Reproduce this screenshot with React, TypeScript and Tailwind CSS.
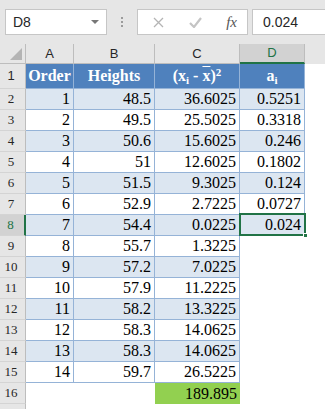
import React from 'react';

const rows: [string, string, string, string][] = [
  ['1', '48.5', '36.6025', '0.5251'],
  ['2', '49.5', '25.5025', '0.3318'],
  ['3', '50.6', '15.6025', '0.246'],
  ['4', '51', '12.6025', '0.1802'],
  ['5', '51.5', '9.3025', '0.124'],
  ['6', '52.9', '2.7225', '0.0727'],
  ['7', '54.4', '0.0225', '0.024'],
  ['8', '55.7', '1.3225', ''],
  ['9', '57.2', '7.0225', ''],
  ['10', '57.9', '11.2225', ''],
  ['11', '58.2', '13.3225', ''],
  ['12', '58.3', '14.0625', ''],
  ['13', '58.3', '14.0625', ''],
  ['14', '59.7', '26.5225', ''],
];

const RowHead = ({ n, active }: { n?: number; active?: boolean }) => (
  <div
    className={
      'w-[26px] shrink-0 flex items-center justify-center pr-[3px] text-[13px] border-b border-[#d4d4d4] ' +
      (active
        ? 'bg-[#d2d2d2] text-[#217346] border-r-2 border-r-[#217346]'
        : 'bg-[#e6e6e6] text-[#262626] border-r border-r-[#bdbdbd]')
    }
  >
    {n}
  </div>
);

const App = () => {
  return (
    <div className="w-[325px] h-[409px] overflow-hidden bg-white font-['Liberation_Sans',sans-serif]">
      {/* ── Formula bar ───────────────────────────────── */}
      <div className="h-[44px] bg-[#e6e6e6] flex items-start pt-[9px] pl-[5px]">
        <div className="w-[102px] h-[26px] bg-white border border-[#c6c6c6] flex items-center justify-between pl-[7px] pr-[7px] text-[14px] text-[#262626]">
          <span>D8</span>
          <span className="w-0 h-0 border-l-[4px] border-r-[4px] border-t-[4px] border-l-transparent border-r-transparent border-t-[#777]" />
        </div>
        <div className="w-[30px] h-[26px] flex flex-col items-center justify-center gap-[2px]">
          <span className="w-[2px] h-[2px] bg-[#9b9b9b]" />
          <span className="w-[2px] h-[2px] bg-[#9b9b9b]" />
          <span className="w-[2px] h-[2px] bg-[#9b9b9b]" />
        </div>
        <div className="w-[111px] h-[26px] bg-white border border-[#c6c6c6] flex items-center pl-[15px] pr-[10px]">
          <svg width="11" height="11" viewBox="0 0 11 11">
            <path d="M1 1 L10 10 M10 1 L1 10" stroke="#b4b4b4" strokeWidth="1.3" />
          </svg>
          <svg width="13" height="11" viewBox="0 0 13 11" className="ml-[25px]">
            <path d="M1 6 L5 10 L12 1" stroke="#c4c4c4" strokeWidth="2.2" fill="none" />
          </svg>
          <span className="italic font-['Liberation_Serif',serif] text-[15px] text-[#555] ml-auto">fx</span>
        </div>
        <div className="ml-[4px] flex-1 h-[26px] bg-white border border-[#c6c6c6] border-r-0 flex items-center pl-[10px] text-[14px] text-[#262626]">
          0.024
        </div>
      </div>

      {/* ── Column headers ───────────────────────────── */}
      <div className="flex h-[20px] bg-[#e6e6e6] text-[13px] text-[#262626]">
        <div className="w-[26px] border-r border-b border-[#bdbdbd] relative">
          <svg className="absolute right-[3px] bottom-[3px]" width="12" height="12" viewBox="0 0 12 12">
            <path d="M12 0 L12 12 L0 12 Z" fill="#b4b4b4" />
          </svg>
        </div>
        <div className="w-[48px] flex items-center justify-center border-r border-b border-[#bdbdbd]">A</div>
        <div className="w-[81px] flex items-center justify-center border-r border-b border-[#bdbdbd]">B</div>
        <div className="w-[85px] flex items-center justify-center border-r border-b border-[#bdbdbd]">C</div>
        <div className="w-[65px] flex items-center justify-center bg-[#d2d2d2] text-[#217346] border-r border-r-[#bdbdbd] border-b-2 border-b-[#217346]">D</div>
        <div className="flex-1" />
      </div>

      {/* ── Header row 1 ─────────────────────────────── */}
      <div className="flex h-[25px]">
        <RowHead n={1} />
        <div className="flex font-['Liberation_Serif',serif] text-[16px] font-bold text-white bg-[#4f81bd]">
          <div className="w-[48px] flex items-center justify-center border-r border-b border-[#95b3d7]">Order</div>
          <div className="w-[81px] flex items-center justify-center border-r border-b border-[#95b3d7]">Heights</div>
          <div className="w-[85px] flex items-center justify-center border-r border-b border-[#95b3d7]">
            <span>
              (x<sub className="text-[11px]">i</sub> - <span className="overline">x</span>)<sup className="text-[11px]">2</sup>
            </span>
          </div>
          <div className="w-[65px] flex items-center justify-center border-r border-b border-[#95b3d7]">
            <span>
              a<sub className="text-[11px]">i</sub>
            </span>
          </div>
        </div>
      </div>

      {/* ── Data rows ────────────────────────────────── */}
      {rows.map((r, i) => {
        const shade = i % 2 === 0 ? 'bg-[#dce6f1]' : 'bg-white';
        const cell = 'flex items-center justify-end pr-[3px] border-r border-b border-[#95b3d7] ' + shade;
        const active = i === 6;
        return (
          <div key={i} className="flex h-[21px] font-['Liberation_Serif',serif] text-[16px] text-black">
            <RowHead n={i + 2} active={active} />
            <div className={'w-[48px] ' + cell}>{r[0]}</div>
            <div className={'w-[81px] ' + cell}>{r[1]}</div>
            <div className={'w-[85px] ' + cell}>{r[2]}</div>
            {r[3] !== '' ? (
              <div className={'w-[65px] relative ' + cell}>
                {r[3]}
                {active && (
                  <>
                    <span className="absolute -left-[1px] -top-[2px] -right-[2px] -bottom-[1px] border-2 border-[#217346]" />
                    <span className="absolute -right-[4px] -bottom-[3px] w-[5px] h-[5px] bg-[#217346] border border-white" />
                  </>
                )}
              </div>
            ) : (
              <div className="w-[65px]" />
            )}
          </div>
        );
      })}

      {/* ── Total row ────────────────────────────────── */}
      <div className="flex h-[21px] font-['Liberation_Serif',serif] text-[16px] text-black">
        <RowHead n={16} />
        <div className="w-[48px]" />
        <div className="w-[81px]" />
        <div className="w-[85px] flex items-center justify-end pr-[3px] bg-[#92d050]">189.895</div>
      </div>
      <div className="flex h-[10px]">
        <RowHead />
      </div>
    </div>
  );
};

export default App;
